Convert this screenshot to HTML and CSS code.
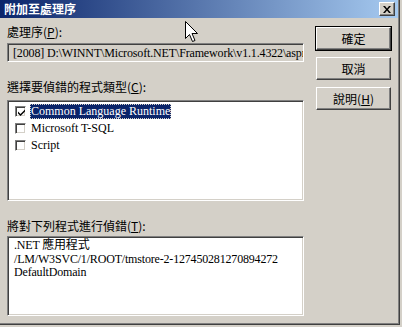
FILE: index.html
```html
<!DOCTYPE html>
<html lang="zh-Hant">
<head>
<meta charset="utf-8">
<link rel="stylesheet" href="styles.css">
</head>
<body>
<div class="window">
  <div class="titlebar">
    <span class="title">附加至處理序</span>
    <span class="close-btn">
      <svg width="8" height="7" viewBox="0 0 8 7"><path d="M0 0h2l2 2.5 2-2.5h2L5 3.5 8 7H6L4 4.5 2 7H0l3-3.5z" fill="#000"/></svg>
    </span>
  </div>
  <div class="content">
    <div class="left">
      <div class="label">處理序(<u>P</u>):</div>
      <div class="field">[2008] D:\WINNT\Microsoft.NET\Framework\v1.1.4322\aspn</div>
      <div class="label label2">選擇要偵錯的程式類型(<u>C</u>):</div>
      <div class="listbox">
        <div class="row">
          <span class="check"><svg width="7" height="7" viewBox="0 0 7 7"><path d="M0 2.5l2.5 2.5L7 0.5V2.5L2.5 7 0 4.5z" fill="#000"/></svg></span>
          <span class="item selected">Common Language Runtime</span>
        </div>
        <div class="row">
          <span class="check"></span>
          <span class="item">Microsoft T-SQL</span>
        </div>
        <div class="row">
          <span class="check"></span>
          <span class="item">Script</span>
        </div>
      </div>
      <div class="label label3">將對下列程式進行偵錯(<u>T</u>):</div>
      <div class="textbox">
        <div>.NET 應用程式</div>
        <div>/LM/W3SVC/1/ROOT/tmstore-2-127450281270894272</div>
        <div>DefaultDomain</div>
      </div>
    </div>
    <div class="buttons">
      <div class="btn default">確定</div>
      <div class="btn">取消</div>
      <div class="btn">說明(<u>H</u>)</div>
    </div>
  </div>
  <svg class="cursor" width="13" height="21" viewBox="0 0 13 21"><path d="M0.5 0.5V17.5L4.5 13.5L7.5 20.5L10 19.5L7 12.5H12.5Z" fill="#fff" stroke="#000" stroke-width="1"/></svg>
</div>
</body>
</html>
```

FILE: styles.css
```css
html, body {
  margin: 0;
  padding: 0;
  background: #d4d0c8;
}
body {
  font-family: "Liberation Serif", "Noto Sans CJK TC", serif;
  font-size: 12px;
  color: #000;
}
.window {
  position: relative;
  width: 400px;
  height: 325px;
  box-sizing: border-box;
  background: #d4d0c8;
  border-right: 1px solid #404040;
  border-bottom: 1px solid #404040;
  box-shadow: inset -1px -1px #808080;
  overflow: hidden;
}
.titlebar {
  height: 18px;
  display: flex;
  align-items: center;
  justify-content: space-between;
  padding: 0 3px 0 4px;
  background: linear-gradient(to right, #0a246a, #a6caf0);
  margin-right: 1px;
}
.title {
  color: #fff;
  font-family: "Noto Sans CJK TC", sans-serif;
  font-weight: bold;
  font-size: 12px;
  line-height: 14px;
}
.close-btn {
  width: 16px;
  height: 14px;
  box-sizing: border-box;
  background: #d4d0c8;
  border: 1px solid;
  border-color: #fff #404040 #404040 #fff;
  box-shadow: inset -1px -1px #808080;
  display: flex;
  align-items: center;
  justify-content: center;
}
.content {
  display: flex;
  gap: 12px;
  padding: 7px 0 0 7px;
}
.left {
  width: 297px;
  display: flex;
  flex-direction: column;
}
.label {
  height: 13px;
  line-height: 13px;
  white-space: nowrap;
  font-family: "Noto Sans CJK TC", sans-serif;
  font-size: 12px;
}
.label u, .btn u {
  text-underline-offset: 1px;
}
.label2 { margin-top: 18px; }
.label3 { margin-top: 18px; }
.field, .listbox, .textbox {
  box-sizing: border-box;
  border: 1px solid;
  border-color: #808080 #fff #fff #808080;
  box-shadow: inset 1px 1px #404040, inset -1px -1px #d4d0c8;
}
.field {
  margin-top: 5px;
  height: 19px;
  padding: 1px 0 0 5px;
  line-height: 16px;
  letter-spacing: -0.15px;
  white-space: nowrap;
  overflow: hidden;
  background: #d4d0c8;
}
.listbox {
  margin-top: 7px;
  height: 101px;
  background: #fff;
  padding: 2px 2px;
}
.row {
  display: flex;
  align-items: center;
  height: 17px;
}
.check {
  box-sizing: border-box;
  width: 11px;
  height: 11px;
  margin-left: 5px;
  margin-right: 4px;
  background: #fff;
  border: 1px solid;
  border-color: #808080 #fff #fff #808080;
  box-shadow: inset 1px 1px #404040, inset -1px -1px #d4d0c8;
  display: flex;
  align-items: center;
  justify-content: center;
}
.check svg {
  margin: 1px 0 0 1px;
}
.item {
  line-height: 15px;
  padding: 0 1px;
  white-space: nowrap;
}
.selected {
  background: #0a246a;
  color: #fff;
  outline: 1px dotted #d4d0c8;
  outline-offset: -1px;
}
.textbox {
  margin-top: 4px;
  height: 80px;
  background: #fff;
  padding: 2px 0 0 6px;
  line-height: 13.5px;
  letter-spacing: -0.18px;
  white-space: nowrap;
  overflow: hidden;
}
.buttons {
  display: flex;
  flex-direction: column;
  gap: 7px;
  margin-top: 2px;
}
.btn {
  box-sizing: border-box;
  width: 75px;
  height: 23px;
  background: #d4d0c8;
  border: 1px solid;
  border-color: #fff #404040 #404040 #fff;
  box-shadow: inset -1px -1px #808080;
  display: flex;
  align-items: center;
  justify-content: center;
  font-family: "Noto Sans CJK TC", sans-serif;
  font-size: 12px;
  line-height: 13px;
}
.btn.default {
  outline: 1px solid #000;
}
.cursor {
  position: absolute;
  left: 185px;
  top: 21px;
}
```
